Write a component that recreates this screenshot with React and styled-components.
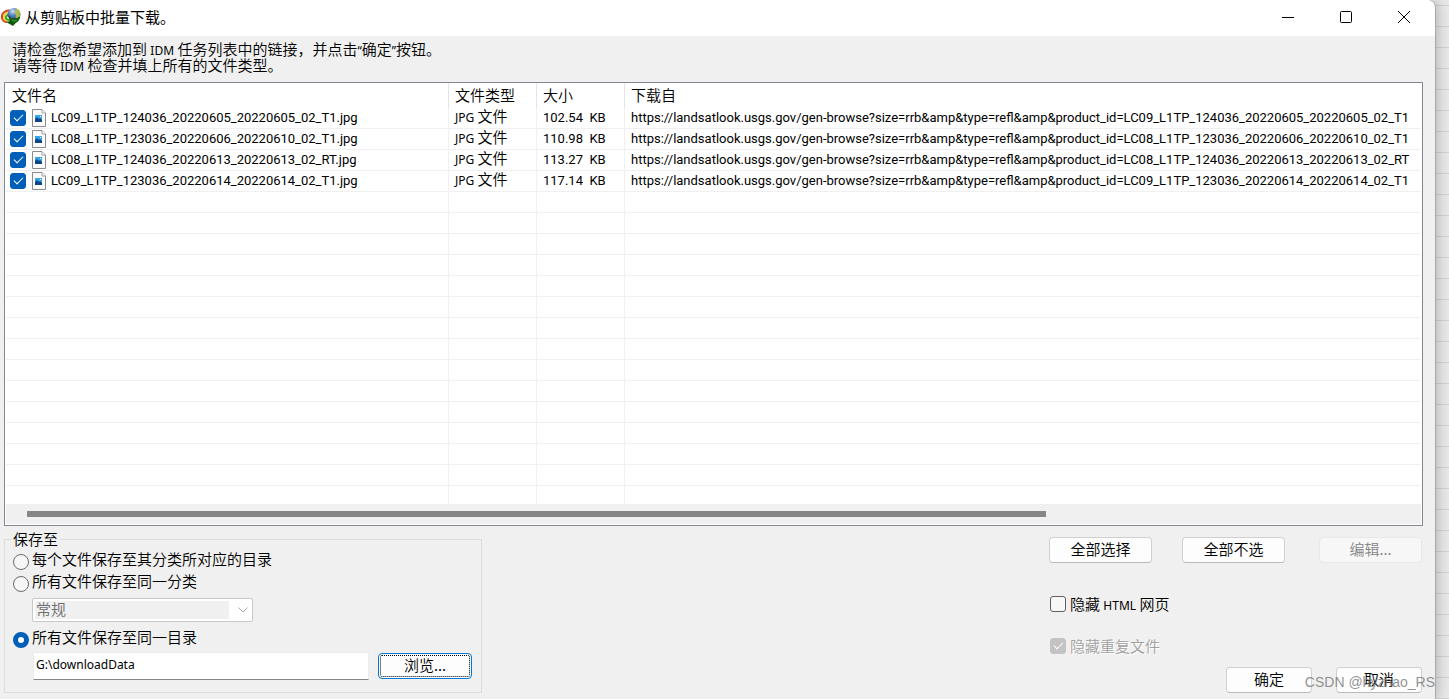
import React from "react";
import { useState } from "react";
import styled, { createGlobalStyle, css } from "styled-components";

const GlobalStyle = createGlobalStyle`
  * {
    box-sizing: border-box;
  }
  body {
    margin: 0;
    background-color: #e9e9e9;
    color: #000;
    font-family: Roboto, "Noto Sans CJK SC", sans-serif;
    font-size: 13px;
  }
`;

const Desktop = styled.div`
  position: relative;
  min-height: 100vh;
  padding-right: 14px;
  overflow: hidden;
  background: repeating-linear-gradient(
    to bottom,
    transparent 0 5px,
    #d2d2d2 5px 6px,
    transparent 6px 21px
  );
`;

const Window = styled.div`
  min-height: 100vh;
  display: flex;
  flex-direction: column;
  background-color: #f0f0f0;
  border-top-right-radius: 8px;
  box-shadow: 1px 0 0 #a9a9a9, 2px 0 14px rgba(0, 0, 0, 0.25);
  overflow: hidden;
`;

const TitleBar = styled.header`
  height: 36px;
  padding-right: 2px;
  display: flex;
  align-items: center;
  background-color: #fff;
`;

const Title = styled.h1`
  flex: 1;
  margin: 0 0 2px 3px;
  font-family: "Noto Sans CJK SC", sans-serif;
  font-size: 15px;
  font-weight: 400;
  line-height: 20px;
`;

const CaptionButton = styled.button`
  width: 58px;
  height: 36px;
  padding: 0 0 2px;
  display: flex;
  align-items: center;
  justify-content: center;
  border: none;
  background: none;
`;

const Message = styled.p`
  margin: 0;
  padding: 5px 12px 9px;
  font-family: "Noto Sans CJK SC", sans-serif;
  font-size: 15px;
  font-weight: 350;
  line-height: 16px;
`;

const Latin = styled.span`
  font-family: "Noto Sans", sans-serif;
  font-size: 12px;
  font-weight: 400;
  line-height: 12px;
`;

const Cjk = styled.span`
  font-family: "Noto Sans CJK SC", sans-serif;
  font-size: 15px;
  font-weight: 350;
  line-height: 12px;
`;

const ListBox = styled.section`
  margin: 0 12px 0 4px;
  border: 1px solid #828790;
  background-color: #fff;
`;

const ListBody = styled.div`
  height: 421px;
  padding: 0 1px;
  overflow: hidden;
`;

const Table = styled.table`
  width: 100%;
  table-layout: fixed;
  border-collapse: separate;
  border-spacing: 0;
`;

const Th = styled.th`
  width: ${(props) => props.$width || "auto"};
  height: 25px;
  padding: 0 6px 1px;
  border-right: 1px solid ${(props) => (props.$last ? "#fff" : "#e5e5e5")};
  font-family: "Noto Sans CJK SC", sans-serif;
  font-size: 15px;
  font-weight: 350;
  line-height: 24px;
  text-align: left;
`;

const Td = styled.td`
  height: 21px;
  padding: 0 0 0 6px;
  border-right: 1px solid ${(props) => (props.$last ? "#fff" : "#f0f0f0")};
  border-bottom: 1px solid #f0f0f0;
  line-height: 20px;
  white-space: nowrap;

  &:first-child {
    padding-left: 4px;
  }
`;

const FileLabel = styled.label`
  display: flex;
  align-items: center;
`;

const CheckBox = styled.input.attrs({ type: "checkbox" })`
  appearance: none;
  flex: none;
  width: 16px;
  height: 16px;
  margin: 0;
  display: grid;
  place-items: center;
  border: 1px solid #5f5f5f;
  border-radius: 3px;
  background-color: #f7f7f7;

  &:checked {
    border-color: #005fb8;
    background-color: #005fb8;
  }
  &:checked:disabled {
    border-color: #c3c3c3;
    background-color: #c3c3c3;
  }
  &:checked::after {
    content: "";
    width: 4px;
    height: 8px;
    margin-bottom: 3px;
    border: solid #fff;
    border-width: 0 1px 1px 0;
    transform: rotate(45deg);
  }
`;

const FileIcon = styled.svg`
  flex: none;
  margin: 0 5px 0 6px;
`;

const ScrollBar = styled.div`
  height: 21px;
  margin: 0 1px;
  padding: 7px 375px 0 21px;
  border-bottom: 1px solid #fff;
  background-color: #f0f0f0;
`;

const ScrollThumb = styled.div`
  height: 6px;
  background-color: #868686;
`;

const Footer = styled.footer`
  flex: 1;
  display: flex;
  align-items: flex-start;
  justify-content: space-between;
  padding: 4px 13px 5px 4px;
`;

const SaveGroup = styled.fieldset`
  width: 478px;
  height: 163px;
  margin: 0;
  padding: 0 9px 0 8px;
  border: 1px solid #dcdcdc;
`;

const Legend = styled.legend`
  margin-left: -2px;
  padding: 0 2px;
  font-family: "Noto Sans CJK SC", sans-serif;
  font-size: 15px;
  font-weight: 350;
  line-height: 18px;
`;

const OptionLabel = styled.label`
  height: 22px;
  display: flex;
  align-items: flex-end;
  gap: 3px;
  font-family: "Noto Sans CJK SC", sans-serif;
  font-size: 15px;
  font-weight: 350;
  line-height: 22px;
`;

const Radio = styled.input.attrs({ type: "radio" })`
  appearance: none;
  flex: none;
  width: 16px;
  height: 16px;
  margin: 0;
  border: 1px solid #6b6b6b;
  border-radius: 50%;
  background-color: #f7f7f7;

  &:checked {
    border: 5px solid #005fb8;
    background-color: #fff;
  }
`;

const SelectWrap = styled.div`
  width: 221px;
  margin: 6px 0 4px 19px;
  display: grid;
  align-items: center;

  > * {
    grid-area: 1 / 1;
  }
  > svg {
    justify-self: end;
    margin-right: 5px;
    pointer-events: none;
  }
`;

const Select = styled.select`
  appearance: none;
  width: 100%;
  height: 24px;
  padding: 0 26px 3px 3px;
  border: 1px solid #c8c8c8;
  border-radius: 2px;
  background: linear-gradient(#f0f0f0, #f0f0f0) 2px 2px / calc(100% - 25px)
    calc(100% - 4px) no-repeat #fff;
  color: #6d6d6d;
  opacity: 1;
  font-family: "Noto Sans CJK SC", sans-serif;
  font-size: 15px;
  font-weight: 350;
  line-height: 20px;
`;

const PathRow = styled.div`
  margin: 4px 0 0 20px;
  display: flex;
  align-items: center;
  gap: 9px;
`;

const PathInput = styled.input`
  flex: 1;
  min-width: 0;
  height: 28px;
  padding: 0 2px 4px;
  border: 1px solid #ececec;
  border-bottom-color: #868686;
  background-color: #fff;
  font-family: "Noto Sans", sans-serif;
  font-size: 12px;
`;

const Button = styled.button`
  width: ${(props) => props.$width || "103px"};
  height: 26px;
  padding: 0 0 2px;
  border: 1px solid #d0d0d0;
  border-bottom-color: #bababa;
  border-radius: 4px;
  background-color: #fdfdfd;
  color: #000;
  font-family: "Noto Sans CJK SC", sans-serif;
  font-size: 15px;
  font-weight: 350;
  line-height: 20px;

  &:disabled {
    border-color: #e8e8e8;
    background-color: #f7f7f7;
    color: #838383;
  }

  ${(props) =>
    props.$focused &&
    css`
      border-color: #0078d4;
      outline: 1px dotted #000;
      outline-offset: -3px;
    `}
`;

const Actions = styled.div`
  width: 373px;
  margin-top: 7px;
  display: flex;
  flex-direction: column;
`;

const SelectButtons = styled.div`
  display: grid;
  grid-template-columns: 133px 1fr 103px;
`;

const Filters = styled.div`
  margin: 30px 0 10px 1px;
  display: flex;
  flex-direction: column;
  align-items: flex-start;
  gap: 20px;
`;

const FilterLabel = styled.label`
  height: 22px;
  display: flex;
  align-items: center;
  gap: 4px;
  color: ${(props) => (props.$disabled ? "#a0a0a0" : "#000")};
  text-shadow: ${(props) => (props.$disabled ? "1px 1px 0 #fff" : "none")};
  font-family: "Noto Sans CJK SC", sans-serif;
  font-size: 15px;
  font-weight: 350;
  line-height: 20px;
`;

const DialogButtons = styled.div`
  display: flex;
  justify-content: flex-end;
  gap: 24px;
`;

const Watermark = styled.span`
  position: absolute;
  right: 14px;
  bottom: 8px;
  color: rgba(110, 110, 110, 0.75);
  font-family: "Liberation Sans", sans-serif;
  font-size: 14px;
  line-height: 18px;
  pointer-events: none;
`;

const source =
  "https://landsatlook.usgs.gov/gen-browse?size=rrb&amp&type=refl&amp&product_id=";

const files = [
  { id: "LC09_L1TP_124036_20220605_20220605_02_T1", size: "102.54" },
  { id: "LC08_L1TP_123036_20220606_20220610_02_T1", size: "110.98" },
  { id: "LC08_L1TP_124036_20220613_20220613_02_RT", size: "113.27" },
  { id: "LC09_L1TP_123036_20220614_20220614_02_T1", size: "117.14" },
];

const emptyRows = Array.from({ length: 15 }, (_, i) => i);

const Logo = () => (
  <svg width="22" height="22" viewBox="0 0 22 22" aria-hidden="true">
    <defs>
      <radialGradient id="globe" cx="0.4" cy="0.25" r="0.75">
        <stop offset="0" stopColor="#d5e2f2" />
        <stop offset="0.4" stopColor="#5f8acb" />
        <stop offset="1" stopColor="#1b3577" />
      </radialGradient>
    </defs>
    <g fill="none" strokeWidth="2">
      <path d="M10 3.500C5 3 1 7 2 11c.5 2 2 4 5 4" stroke="#d9482b" />
      <path d="M10 5.500C6 5 3.500 8 4 10.500c.5 2 2 3 4 3" stroke="#f2d42c" />
      <path d="M10 7.500c-3 0-4.500 2-4 3.500s2 2 4 2" stroke="#3c9f2b" />
    </g>
    <circle cx="14" cy="7.500" r="6.500" fill="url(#globe)" />
    <path
      d="M16.500 1.500c3 1 4.500 4 3.800 7-.8 2-2.300 3-4.300 2.500-1-1.500.5-2.500-.5-4-1.500-.5-.5-4 1-5.500z"
      fill="#b9c93f"
      opacity="0.85"
    />
    <path d="M8.500 8l3 3c3 1 5.500.5 8.500-1.500 0 3-1.500 5-4 6.200L13 19l-7-4 4-1z" fill="#12590f" />
    <path d="M9 9l3 3.500c2 .8 4 .5 6-.5-1 2-3 3-5 3z" fill="#2f8f22" />
  </svg>
);

const ImageFile = () => (
  <FileIcon width="14" height="18" viewBox="0 0 14 18" aria-hidden="true">
    <path d="M.5.5h9.500l3.500 3.500v13.500H.5z" fill="#fbfbfb" stroke="#8b8b8b" />
    <path d="M10 .5V4h3.500" fill="#fff" stroke="#a0a0a0" />
    <rect x="3" y="6" width="7" height="7" fill="#3aa5e8" />
    <path d="M3 13v-3l2-2 2 2 1-1 2 2v2z" fill="#0b4689" />
    <path d="M8 7h1v1H8z" fill="#fff" />
  </FileIcon>
);

const App = () => {
  const [checked, setChecked] = useState(files.map(() => true));
  const [target, setTarget] = useState("folder");
  const [folder, setFolder] = useState("G:\\downloadData");
  const [hideHtml, setHideHtml] = useState(false);

  const handleCheck = (index) => {
    setChecked(checked.map((value, i) => (i === index ? !value : value)));
  };

  return (
    <Desktop>
      <GlobalStyle />
      <Window>
        <TitleBar>
          <Logo />
          <Title>从剪贴板中批量下载。</Title>
          <CaptionButton aria-label="最小化">
            <svg width="12" height="12" stroke="#000">
              <path d="M0 6.500h12" />
            </svg>
          </CaptionButton>
          <CaptionButton aria-label="最大化">
            <svg width="12" height="12" stroke="#000" fill="none">
              <rect x="0.500" y="0.500" width="11" height="11" rx="1" />
            </svg>
          </CaptionButton>
          <CaptionButton aria-label="关闭">
            <svg width="12" height="12" stroke="#000">
              <path d="M0 0l12 12M12 0L0 12" />
            </svg>
          </CaptionButton>
        </TitleBar>
        <Message>
          请检查您希望添加到 <Latin>IDM</Latin>{" "}
          任务列表中的链接，并点击<Latin>“</Latin>确定<Latin>”</Latin>按钮。
          <br />
          请等待 <Latin>IDM</Latin> 检查并填上所有的文件类型。
        </Message>
        <ListBox>
          <ListBody>
            <Table>
              <thead>
                <tr>
                  <Th $width="443px">文件名</Th>
                  <Th $width="88px">文件类型</Th>
                  <Th $width="88px">大小</Th>
                  <Th $last>下载自</Th>
                </tr>
              </thead>
              <tbody>
                {files.map((file, index) => (
                  <tr key={file.id}>
                    <Td>
                      <FileLabel>
                        <CheckBox
                          checked={checked[index]}
                          onChange={() => handleCheck(index)}
                        />
                        <ImageFile />
                        {file.id}.jpg
                      </FileLabel>
                    </Td>
                    <Td>
                      <Latin>JPG</Latin> <Cjk>文件</Cjk>
                    </Td>
                    <Td>{file.size}&nbsp; KB</Td>
                    <Td $last>
                      {source}
                      {file.id}
                    </Td>
                  </tr>
                ))}
                {emptyRows.map((row) => (
                  <tr key={row}>
                    <Td />
                    <Td />
                    <Td />
                    <Td $last />
                  </tr>
                ))}
              </tbody>
            </Table>
          </ListBody>
          <ScrollBar>
            <ScrollThumb />
          </ScrollBar>
        </ListBox>
        <Footer>
          <SaveGroup>
            <Legend>保存至</Legend>
            <OptionLabel>
              <Radio
                name="target"
                checked={target === "each"}
                onChange={() => setTarget("each")}
              />
              每个文件保存至其分类所对应的目录
            </OptionLabel>
            <OptionLabel>
              <Radio
                name="target"
                checked={target === "category"}
                onChange={() => setTarget("category")}
              />
              所有文件保存至同一分类
            </OptionLabel>
            <SelectWrap>
              <Select aria-label="分类" disabled={target !== "category"}>
                <option>常规</option>
              </Select>
              <svg width="10" height="6" fill="none" stroke="#a8a8a8">
                <path d="M.5.5L5 5 9.500.5" />
              </svg>
            </SelectWrap>
            <OptionLabel>
              <Radio
                name="target"
                checked={target === "folder"}
                onChange={() => setTarget("folder")}
              />
              所有文件保存至同一目录
            </OptionLabel>
            <PathRow>
              <PathInput
                aria-label="目录"
                value={folder}
                onChange={(e) => setFolder(e.target.value)}
              />
              <Button $width="94px" $focused>
                浏览...
              </Button>
            </PathRow>
          </SaveGroup>
          <Actions>
            <SelectButtons>
              <Button onClick={() => setChecked(files.map(() => true))}>
                全部选择
              </Button>
              <Button onClick={() => setChecked(files.map(() => false))}>
                全部不选
              </Button>
              <Button disabled>编辑...</Button>
            </SelectButtons>
            <Filters>
              <FilterLabel>
                <CheckBox
                  checked={hideHtml}
                  onChange={() => setHideHtml(!hideHtml)}
                />
                <span>
                  隐藏 <Latin>HTML</Latin> 网页
                </span>
              </FilterLabel>
              <FilterLabel $disabled>
                <CheckBox checked disabled readOnly />
                隐藏重复文件
              </FilterLabel>
            </Filters>
            <DialogButtons>
              <Button $width="86px">确定</Button>
              <Button $width="86px">取消</Button>
            </DialogButtons>
          </Actions>
        </Footer>
      </Window>
      <Watermark>CSDN @hyzhao_RS</Watermark>
    </Desktop>
  );
};

export default App;
